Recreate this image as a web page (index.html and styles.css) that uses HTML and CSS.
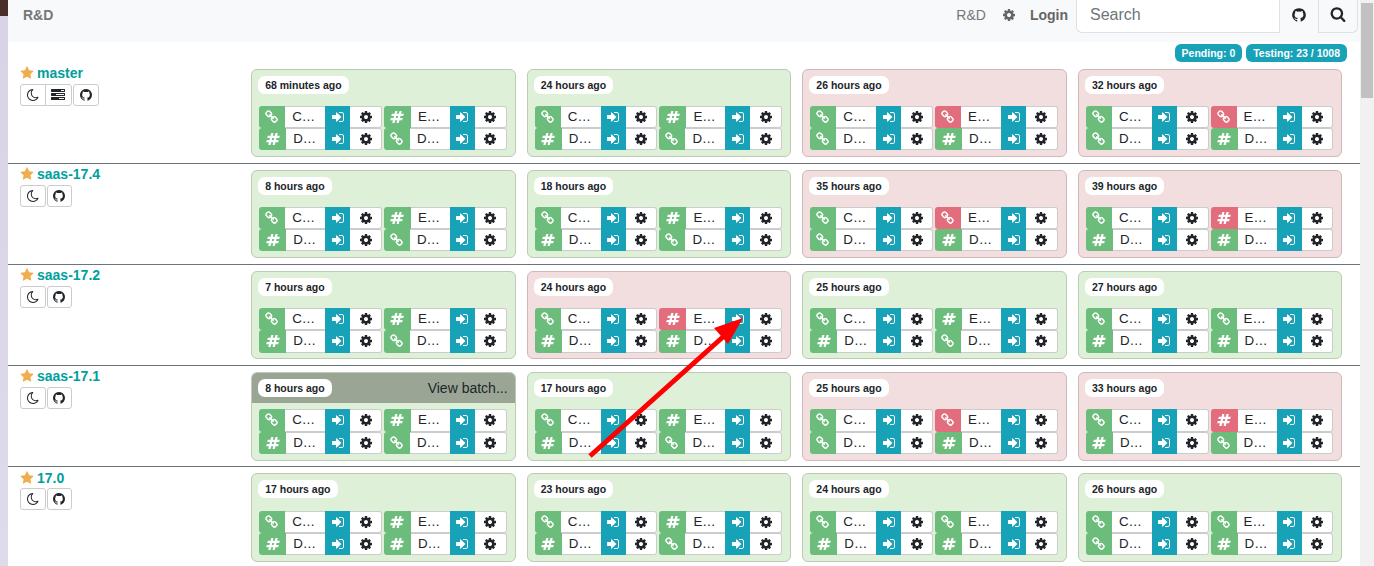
FILE: index.html
```html
<!DOCTYPE html>
<html lang="en">

<head>
    <meta charset="UTF-8">
    <meta name="viewport" content="width=device-width, initial-scale=1.0">
    <title>Runbot R&amp;D</title>
    <link rel="stylesheet" href="styles.css">
</head>

<body>
    <svg class="icon-defs" xmlns="http://www.w3.org/2000/svg">
        <symbol id="i-cog" viewBox="0 0 1792 1792"><path d="M1152 896q0-106-75-181t-181-75-181 75-75 181 75 181 181 75 181-75 75-181zm512-109v222q0 12-8 23t-20 13l-185 28q-19 54-39 91 35 50 107 138 10 12 10 25t-9 23q-27 37-99 108t-94 71q-12 0-26-9l-138-108q-44 23-91 38-16 136-29 186-7 28-36 28h-222q-14 0-24.5-8.5t-11.5-21.5l-28-184q-49-16-90-37l-141 107q-10 9-25 9-14 0-25-11-126-114-165-168-7-10-7-23 0-12 8-23 15-21 51-66.5t54-70.5q-27-50-41-99l-183-27q-13-2-21-12.5t-8-23.5v-222q0-12 8-23t19-13l186-28q14-46 39-92-40-57-107-138-10-12-10-24 0-10 9-23 26-36 98.5-107.5t94.5-71.5q13 0 26 10l138 107q44-23 91-38 16-136 29-186 7-28 36-28h222q14 0 24.5 8.5t11.5 21.5l28 184q49 16 90 37l142-107q9-9 24-9 13 0 25 10 129 119 165 170 7 8 7 22 0 12-8 23-15 21-51 66.5t-54 70.5q26 50 41 98l183 28q13 2 21 12.5t8 23.5z"/></symbol>
        <symbol id="i-star" viewBox="0 0 1792 1792"><path d="M1728 647q0 22-26 48l-363 354 86 500q1 7 1 20 0 21-10.5 35.5t-30.5 14.5q-19 0-40-12l-449-236-449 236q-22 12-40 12-21 0-31.5-14.5t-10.5-35.5q0-6 2-20l86-500-364-354q-25-27-25-48 0-37 56-46l502-73 225-455q19-41 49-41t49 41l225 455 502 73q56 9 56 46z"/></symbol>
        <symbol id="i-github" viewBox="0 0 1792 1792"><path d="M896 128q209 0 385.5 103t279.5 279.5 103 385.5q0 251-146.5 451.5t-378.5 277.5q-27 5-40-7t-13-30q0-3 .5-76.5t.5-134.5q0-97-52-142 57-6 102.5-18t94-39 81-66.5 53-105 20.5-150.5q0-119-79-206 37-91-8-204-28-9-81 11t-92 44l-38 24q-93-26-192-26t-192 26q-16-11-42.5-27t-83.5-38.5-85-13.5q-45 113-8 204-79 87-79 206 0 85 20.5 150t52.5 105 80.5 67 94 39 102.5 18q-39 36-49 103-21 10-45 15t-57 5-65.5-21.5-55.5-62.5q-19-32-48.5-52t-49.5-24l-20-3q-21 0-29 4.5t-5 11.5 9 14 13 12l7 5q22 10 43.5 38t31.5 51l10 23q13 38 44 63t67 32 69.5 7 55.5-3.5l23-4q0 38 .5 88.5t.5 54.5q0 18-13 30t-40 7q-232-77-378.5-277.5t-146.5-451.5q0-209 103-385.5t279.5-279.5 385.5-103z"/></symbol>
        <symbol id="i-search" viewBox="0 0 1792 1792"><path d="M1216 832q0-185-131.5-316.5t-316.5-131.5-316.5 131.5-131.5 316.5 131.5 316.5 316.5 131.5 316.5-131.5 131.5-316.5zm512 832q0 52-38 90t-90 38q-54 0-90-38l-343-342q-179 124-399 124-143 0-273.5-55.5t-225-150-150-225-55.5-273.5 55.5-273.5 150-225 225-150 273.5-55.5 273.5 55.5 225 150 150 225 55.5 273.5q0 220-124 399l343 343q37 37 37 90z"/></symbol>
        <symbol id="i-sign-in" viewBox="0 0 1792 1792"><path d="M1312 896q0 26-19 45l-544 544q-19 19-45 19t-45-19-19-45v-288h-448q-26 0-45-19t-19-45v-384q0-26 19-45t45-19h448v-288q0-26 19-45t45-19 45 19l544 544q19 19 19 45zm352-352v704q0 119-84.5 203.5t-203.5 84.5h-320q-13 0-22.5-9.5t-9.5-22.5q0-4-1-20t-.5-26.5 3-23.5 10-19.5 20.5-6.5h320q66 0 113-47t47-113v-704q0-66-47-113t-113-47h-312l-11.5-1-11.5-3-8-5.5-7-9-2-13.5q0-4-1-20t-.5-26.5 3-23.5 10-19.5 20.5-6.5h320q119 0 203.5 84.5t84.5 203.5z"/></symbol>
        <symbol id="i-hash" viewBox="0 0 1792 1792"><path d="M991 1024l64-256h-254l-64 256h254zm768-504l-56 224q-7 24-31 24h-327l-64 256h311q15 0 25 12 10 14 6 28l-56 224q-5 24-31 24h-327l-81 328q-7 24-31 24h-224q-16 0-26-12-9-12-6-28l78-312h-254l-81 328q-7 24-31 24h-225q-15 0-25-12-9-12-6-28l78-312h-311q-15 0-25-12-9-12-6-28l56-224q7-24 31-24h327l64-256h-311q-15 0-25-12-10-14-6-28l56-224q5-24 31-24h327l81-328q7-24 32-24h224q15 0 25 12 9 12 6 28l-78 312h254l81-328q7-24 32-24h224q15 0 25 12 9 12 6 28l-78 312h311q15 0 25 12 9 12 6 28z"/></symbol>
        <symbol id="i-link" viewBox="0 0 1792 1792"><path d="M1456 1216q0-40-28-68l-208-208q-28-28-68-28-42 0-72 32 3 3 19 18.5t21.5 21.5 15 19 13 25.5 3.5 27.5q0 40-28 68t-68 28q-15 0-27.5-3.5t-25.5-13-19-15-21.5-21.5-18.5-19q-33 31-33 73 0 40 28 68l206 207q27 27 68 27 40 0 68-26l147-146q28-28 28-67zm-703-705q0-40-28-68l-206-207q-28-28-68-28-39 0-68 27l-147 146q-28 28-28 67 0 40 28 68l208 208q27 27 68 27 42 0 72-31-3-3-19-18.5t-21.5-21.5-15-19-13-25.5-3.5-27.5q0-40 28-68t68-28q15 0 27.5 3.5t25.5 13 19 15 21.5 21.5 18.5 19q33-31 33-73zm895 705q0 120-85 203l-147 146q-83 83-203 83-121 0-204-85l-206-207q-83-83-83-203 0-123 88-209l-88-88q-86 88-208 88-120 0-204-84l-208-208q-84-84-84-204t85-203l147-146q83-83 203-83 121 0 204 85l206 207q83 83 83 203 0 123-88 209l88 88q86-88 208-88 120 0 204 84l208 208q84 84 84 204z"/></symbol>
        <symbol id="i-tasks" viewBox="0 0 1792 1792"><path d="M1024 1408h640v-128h-640v128zm-384-512h1024v-128h-1024v128zm640-512h384v-128h-384v128zm512 832v256q0 26-19 45t-45 19h-1664q-26 0-45-19t-19-45v-256q0-26 19-45t45-19h1664q26 0 45 19t19 45zm0-512v256q0 26-19 45t-45 19h-1664q-26 0-45-19t-19-45v-256q0-26 19-45t45-19h1664q26 0 45 19t19 45zm0-512v256q0 26-19 45t-45 19h-1664q-26 0-45-19t-19-45v-256q0-26 19-45t45-19h1664q26 0 45 19t19 45z"/></symbol>
        <symbol id="i-moon" viewBox="0 0 1792 1792"><path d="M1390 1303q-54 9-110 9-182 0-337-90t-245-245-90-337q0-192 104-357-201 60-328.5 229t-127.5 384q0 130 51 248.5t136.5 204 204 136.5 248.5 51q144 0 273.5-61.5t220.5-171.5zm203-85q-94 203-283.5 324.5t-413.5 121.5q-156 0-298-61t-245-164-164-245-61-298q0-153 57.5-292.5t156-241.5 235.5-164.5 290-68.5q44-2 61 39 18 41-15 72-86 78-131.5 181.5t-45.5 218.5q0 148 73 273t198 198 273 73q118 0 228-51 41-18 72 13 14 14 17.5 34t-4.5 38z"/></symbol>
    </svg>

    <div class="page">
        <div class="desktop-strip"></div>
        <main class="content">
            <nav class="navbar">
                <a class="brand">R&amp;D</a>
                <div class="nav-right">
                    <a class="nav-link">R&amp;D</a>
                    <svg class="nav-cog"><use href="#i-cog"></use></svg>
                    <a class="nav-login">Login</a>
                    <div class="search-box">Search</div>
                    <div class="nav-btn"><svg class="nav-btn-icon"><use href="#i-github"></use></svg></div>
                    <div class="nav-btn nav-btn-last"><svg class="nav-btn-icon"><use href="#i-search"></use></svg></div>
                </div>
            </nav>
            <div class="status-bar">
                <span class="status-badge">Pending: 0</span>
                <span class="status-badge">Testing: 23 / 1008</span>
            </div>
            <div id="bundles"></div>
        </main>
        <div class="scrollbar"><div class="scrollbar-thumb"></div></div>
    </div>

    <!-- annotation drawn over the screenshot -->
    <svg class="annotation" width="1374" height="566" xmlns="http://www.w3.org/2000/svg">
        <line x1="590" y1="456" x2="724" y2="336" stroke="#f00" stroke-width="5"></line>
        <polygon points="743,318 714,328 728,344" fill="#f00"></polygon>
    </svg>

    <script src="script.js"></script>
</body>

</html>
```

FILE: styles.css
```css
html,
body {
    margin: 0;
    padding: 0;
    height: 100%;
    overflow: hidden;
}

body {
    font-family: 'Liberation Sans', Arial, sans-serif;
    font-size: 13.33px;
    color: #212529;
    background-color: #fff;
}

.icon-defs {
    display: none;
}

.page {
    display: flex;
    height: 566px;
}

.desktop-strip {
    width: 8px;
    flex-shrink: 0;
    background: linear-gradient(#4a2c2a 0, #4a2c2a 16px, #d8d3e6 16px, #dedbea 100%);
}

.content {
    width: 1352px;
    flex-shrink: 0;
    overflow: hidden;
}

.scrollbar {
    flex: 1;
    background-color: #f1f1f1;
    padding: 3px 1px 0;
}

.scrollbar-thumb {
    height: 95px;
    background-color: #c1c1c1;
}

/* top bar */
.navbar {
    height: 41.6px;
    display: flex;
    justify-content: space-between;
    align-items: flex-start;
    padding: 0 2px 0 15px;
    background-color: #f8f9fa;
    box-sizing: border-box;
    font-size: 14px;
}

.brand {
    font-weight: bold;
    color: #777;
    line-height: 30px;
}

.nav-right {
    display: flex;
    align-items: flex-start;
}

.nav-link {
    color: #777;
    line-height: 30px;
}

.nav-cog {
    width: 14px;
    height: 14px;
    margin: 8px 0 0 16px;
    fill: #666;
}

.nav-login {
    margin-left: 14px;
    font-weight: bold;
    color: #666;
    line-height: 30px;
}

.search-box {
    width: 204px;
    height: 33px;
    margin-left: 8px;
    padding-left: 13px;
    box-sizing: border-box;
    background-color: #fff;
    border: 1px solid #dee2e6;
    border-top: none;
    border-radius: 0 0 0 6px;
    font-size: 16px;
    line-height: 29px;
    color: #6c757d;
}

.nav-btn {
    width: 39px;
    height: 33px;
    box-sizing: border-box;
    display: flex;
    justify-content: center;
    align-items: center;
    padding-bottom: 4px;
    border-right: 1px solid #dee2e6;
}

.nav-btn-last {
    border-bottom: 1px solid #dee2e6;
    border-radius: 0 0 6px 0;
}

.nav-btn-icon {
    width: 16px;
    height: 16px;
    fill: #212529;
}

.status-bar {
    height: 21px;
    box-sizing: border-box;
    padding: 2.4px 13px 0 0;
    display: flex;
    justify-content: flex-end;
    gap: 4px;
}

.status-badge {
    height: 18px;
    padding: 0 7px;
    border-radius: 6px;
    background-color: #17a2b8;
    color: #fff;
    font-size: 10.5px;
    font-weight: bold;
    line-height: 18px;
}

/* one branch per row */
.bundle-row {
    height: 101.2px;
    box-sizing: border-box;
    padding-left: 12px;
    display: grid;
    grid-template-columns: 220px repeat(4, 264.4px);
    column-gap: 11.2px;
    align-items: start;
    border-bottom: 1px solid #6c757d;
}

.branch-name {
    display: flex;
    align-items: center;
    height: 20.4px;
    font-size: 14px;
    font-weight: bold;
    color: #00a09d;
}

.branch-star {
    width: 14px;
    height: 14px;
    margin-right: 3px;
    fill: #f0ad4e;
}

.branch-btns {
    display: flex;
    gap: 1px;
    margin-top: 0.6px;
}

.branch-btn-group {
    display: flex;
}

.branch-btn {
    width: 25.5px;
    height: 22px;
    box-sizing: border-box;
    display: flex;
    justify-content: center;
    align-items: center;
    background-color: #fff;
    border: 1px solid #ccc;
    border-radius: 3px;
}

.branch-btn-icon {
    width: 14px;
    height: 14px;
    fill: #212529;
}

.branch-btn-group .branch-btn:first-child {
    border-radius: 3px 0 0 3px;
}

.branch-btn-group .branch-btn:last-child {
    width: 27.5px;
    margin-left: -1px;
    border-radius: 0 3px 3px 0;
}

/* batch cards */
.batch {
    margin-top: 6px;
    height: 88.4px;
    box-sizing: border-box;
    border: 1px solid #bccbb2;
    border-radius: 6px;
    background-color: #dff0d8;
    overflow: hidden;
}

.batch-ko {
    border-color: #cdb9b9;
    background-color: #f2dede;
}

.batch-head {
    height: 30px;
    box-sizing: border-box;
    padding: 6px 7px 6px 6px;
    display: flex;
    justify-content: space-between;
    align-items: center;
}

.batch-head-hover {
    background-color: #9ba595;
}

.batch-age {
    height: 18px;
    padding: 0 7px;
    border-radius: 7px;
    background-color: #fff;
    font-size: 10.5px;
    font-weight: bold;
    line-height: 18px;
}

.batch-view {
    font-size: 14px;
}

.batch-slots {
    margin: 6.2px 8px 0 7px;
    display: grid;
    grid-template-columns: 1fr 1fr;
    column-gap: 2px;
}

.slot {
    display: flex;
    height: 22.2px;
}

.slot-state {
    display: flex;
    justify-content: center;
    align-items: center;
    flex-shrink: 0;
    background-color: #6cbd7c;
    border-radius: 3px 0 0 3px;
    fill: #fff;
}

.slot-link {
    width: 26px;
}

.slot-hash {
    width: 27px;
}

.slot-failed {
    background-color: #e26d7c;
}

.slot-state svg {
    width: 14px;
    height: 14px;
}

.slot-text {
    flex: 1;
    min-width: 0;
    box-sizing: border-box;
    padding-left: 7px;
    background-color: #fff;
    border: 1px solid #ccc;
    border-left: none;
    border-right: none;
    line-height: 20px;
}

.slot-open {
    width: 25px;
    flex-shrink: 0;
    display: flex;
    justify-content: center;
    align-items: center;
    background-color: #17a2b8;
    fill: #fff;
}

.slot-open svg {
    width: 14px;
    height: 14px;
}

.slot-cog {
    width: 31.7px;
    flex-shrink: 0;
    box-sizing: border-box;
    display: flex;
    justify-content: center;
    align-items: center;
    background-color: #fff;
    border: 1px solid #ccc;
    border-left: none;
    border-radius: 0 3px 3px 0;
    fill: #212529;
}

.slot-cog svg {
    width: 14px;
    height: 14px;
}

.annotation {
    position: absolute;
    left: 0;
    top: 0;
    pointer-events: none;
}
```

FILE: script.js
```js
// L = link icon, H = hash icon, a ! marks the failed slot.
// Slots always go in the order C, E, D, D.
const BRANCHES = [
    {
        name: 'master', tasks: true, batches: [
            { age: '68 minutes ago', slots: 'L H H L' },
            { age: '24 hours ago', slots: 'L H H L' },
            { age: '26 hours ago', slots: 'L L! L H', ko: true },
            { age: '32 hours ago', slots: 'L L! L H', ko: true },
        ]
    },
    {
        name: 'saas-17.4', batches: [
            { age: '8 hours ago', slots: 'L H H L' },
            { age: '18 hours ago', slots: 'L H H L' },
            { age: '35 hours ago', slots: 'L L! L H', ko: true },
            { age: '39 hours ago', slots: 'L H! H H', ko: true },
        ]
    },
    {
        name: 'saas-17.2', batches: [
            { age: '7 hours ago', slots: 'L H H L' },
            { age: '24 hours ago', slots: 'L H! H H', ko: true },
            { age: '25 hours ago', slots: 'L H H L' },
            { age: '27 hours ago', slots: 'L L H H' },
        ]
    },
    {
        name: 'saas-17.1', batches: [
            { age: '8 hours ago', slots: 'L H H L', hover: true },
            { age: '17 hours ago', slots: 'L H H L' },
            { age: '25 hours ago', slots: 'L L! L H', ko: true },
            { age: '33 hours ago', slots: 'L H! H L', ko: true },
        ]
    },
    {
        name: '17.0', batches: [
            { age: '17 hours ago', slots: 'L H H H' },
            { age: '23 hours ago', slots: 'L H H L' },
            { age: '24 hours ago', slots: 'L L H H' },
            { age: '26 hours ago', slots: 'L L L H' },
        ]
    },
];

const SLOT_LETTERS = ['C', 'E', 'D', 'D'];

function icon(name, className) {
    const cls = className ? ` class="${className}"` : '';
    return `<svg${cls}><use href="#i-${name}"></use></svg>`;
}

function renderSlot(code, index) {
    const isHash = code[0] === 'H';
    const stateClass = isHash ? 'slot-hash' : 'slot-link';
    const failed = code.endsWith('!') ? ' slot-failed' : '';
    return `<div class="slot">
        <div class="slot-state ${stateClass}${failed}">${icon(isHash ? 'hash' : 'link')}</div>
        <div class="slot-text">${SLOT_LETTERS[index]}…</div>
        <div class="slot-open">${icon('sign-in')}</div>
        <div class="slot-cog">${icon('cog')}</div>
    </div>`;
}

function renderBatch(batch) {
    const view = batch.hover ? '<span class="batch-view">View batch...</span>' : '';
    const headClass = batch.hover ? 'batch-head batch-head-hover' : 'batch-head';
    return `<div class="batch${batch.ko ? ' batch-ko' : ''}">
        <div class="${headClass}"><span class="batch-age">${batch.age}</span>${view}</div>
        <div class="batch-slots">${batch.slots.split(' ').map(renderSlot).join('')}</div>
    </div>`;
}

function renderBranch(branch) {
    const moonBtn = `<div class="branch-btn">${icon('moon', 'branch-btn-icon')}</div>`;
    const tasksBtn = `<div class="branch-btn">${icon('tasks', 'branch-btn-icon')}</div>`;
    const githubBtn = `<div class="branch-btn">${icon('github', 'branch-btn-icon')}</div>`;
    const first = branch.tasks
        ? `<div class="branch-btn-group">${moonBtn}${tasksBtn}</div>`
        : moonBtn;
    return `<div class="bundle-row">
        <div>
            <div class="branch-name">${icon('star', 'branch-star')}${branch.name}</div>
            <div class="branch-btns">${first}${githubBtn}</div>
        </div>
        ${branch.batches.map(renderBatch).join('')}
    </div>`;
}

document.getElementById('bundles').innerHTML = BRANCHES.map(renderBranch).join('');
```
